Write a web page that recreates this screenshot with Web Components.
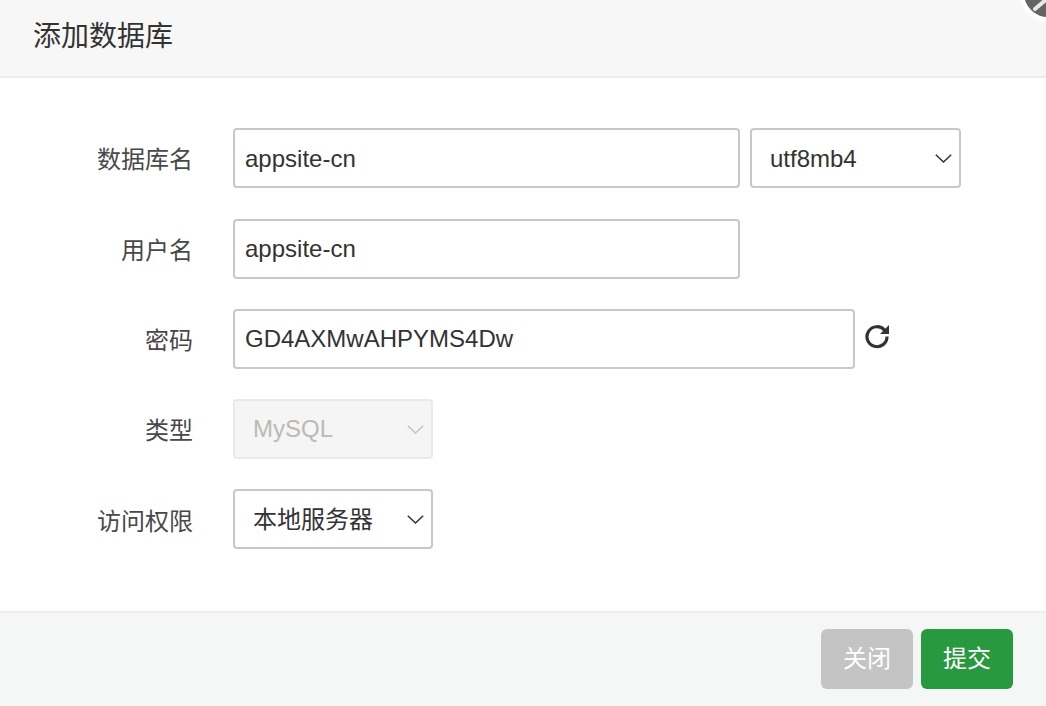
<!DOCTYPE html>
<html lang="zh">
<head>
<meta charset="utf-8">
<title>添加数据库</title>
<style>
  html, body { margin: 0; height: 100%; background: #fff; }
  body { font-family: "Liberation Sans", "Noto Sans CJK SC", sans-serif; color: #333; overflow: hidden; }
</style>
</head>
<body>
<db-dialog>
  <span slot="title">添加数据库</span>
  <form-row label="数据库名" nudge="-1">
    <text-field width="507" value="appsite-cn" nudge="1"></text-field>
    <select-field width="211" value="utf8mb4" nudge="1"></select-field>
  </form-row>
  <form-row label="用户名">
    <text-field width="507" value="appsite-cn"></text-field>
  </form-row>
  <form-row label="密码">
    <text-field width="622" value="GD4AXMwAHPYMS4Dw"></text-field>
    <refresh-icon></refresh-icon>
  </form-row>
  <form-row label="类型" nudge="-1">
    <select-field width="200" value="MySQL" disabled></select-field>
  </form-row>
  <form-row label="访问权限">
    <select-field width="200" value="本地服务器" nudge="-2"></select-field>
  </form-row>
  <action-button slot="actions" kind="close">关闭</action-button>
  <action-button slot="actions" kind="submit">提交</action-button>
</db-dialog>

<script>
// vertical text correction in px, applied as a margin inside a centred flex box
const nudgeOf = el => (Number(el.getAttribute('nudge')) || 0) * 2;

class DbDialog extends HTMLElement {
  connectedCallback() {
    this.attachShadow({ mode: 'open' });
    this.shadowRoot.innerHTML = `
      <style>
        :host { display: flex; flex-direction: column; position: relative; width: 1046px; height: 706px; overflow: hidden; background: #fff; }
        header {
          height: 76px;
          box-sizing: border-box;
          padding: 0 0 8px 33px;
          flex: none;
          display: flex;
          align-items: center;
          background: #f7f7f7;
          font-size: 28px;
          color: #333;
        }
        .rule { height: 2px; background: #ebebeb; flex: none; }
        .form { flex: 1; display: flex; flex-direction: column; gap: 30.25px; padding-top: 50.4px; }
        footer {
          height: 95px;
          flex: none;
          box-sizing: border-box;
          padding: 16px 33px 0 0;
          display: flex;
          justify-content: flex-end;
          gap: 8px;
          background: #f5f6f6;
          border-top: 2px solid #eeeeee;
        }
        .close {
          position: absolute;
          top: -31px;
          right: -26px;
          width: 48px;
          height: 48px;
          border-radius: 50%;
          background: #646464;
          box-shadow: 0 0 3px 5px #fff;
          display: block;
        }
        .close svg { display: block; width: 100%; height: 100%; }
      </style>
      <header><slot name="title"></slot></header>
      <div class="rule"></div>
      <div class="form"><slot></slot></div>
      <footer><slot name="actions"></slot></footer>
      <span class="close">
        <svg viewBox="0 0 48 48"><path d="M11 40 L24 29" stroke="#e8e8e8" stroke-width="4" stroke-linecap="round" fill="none"/></svg>
      </span>
    `;
  }
}
customElements.define('db-dialog', DbDialog);

class FormRow extends HTMLElement {
  connectedCallback() {
    this.attachShadow({ mode: 'open' });
    this.shadowRoot.innerHTML = `
      <style>
        :host { display: flex; align-items: center; height: 60px; }
        label { width: 193px; text-align: right; font-size: 24px; color: #484848; margin: ${nudgeOf(this)}px 40px 0 0; flex: none; }
        .fields { display: flex; align-items: center; gap: 10px; }
      </style>
      <label>${this.getAttribute('label')}</label>
      <div class="fields"><slot></slot></div>
    `;
  }
}
customElements.define('form-row', FormRow);

class TextField extends HTMLElement {
  connectedCallback() {
    this.attachShadow({ mode: 'open' });
    this.shadowRoot.innerHTML = `
      <style>
        :host { display: block; }
        .box {
          box-sizing: border-box;
          width: ${this.getAttribute('width')}px;
          height: 60px;
          padding: 0 10px;
          display: flex;
          align-items: center;
          border: 2px solid #c8c8c8;
          border-radius: 4px;
          font-size: 24px;
          color: #333;
          background: #fff;
        }
        span { margin-top: ${nudgeOf(this)}px; }
      </style>
      <div class="box"><span>${this.getAttribute('value')}</span></div>
    `;
  }
}
customElements.define('text-field', TextField);

class SelectField extends HTMLElement {
  connectedCallback() {
    const off = this.hasAttribute('disabled');
    this.attachShadow({ mode: 'open' });
    this.shadowRoot.innerHTML = `
      <style>
        :host { display: block; }
        .box {
          box-sizing: border-box;
          width: ${this.getAttribute('width')}px;
          height: 60px;
          padding: 0 7px 0 18px;
          display: flex;
          align-items: center;
          justify-content: space-between;
          border: 2px solid ${off ? '#e9e9e9' : '#c8c8c8'};
          border-radius: 4px;
          font-size: 24px;
          color: ${off ? '#bcbab1' : '#333'};
          background: ${off ? '#f5f5f5' : '#fff'};
        }
        span { margin-top: ${nudgeOf(this)}px; }
        svg { width: 17px; height: 9px; flex: none; }
      </style>
      <div class="box">
        <span>${this.getAttribute('value')}</span>
        <svg viewBox="0 0 17 9"><path d="M.8 .8 L8.5 8 L16.2 .8" fill="none" stroke="${off ? '#c4c4bc' : '#333'}" stroke-width="1.5"/></svg>
      </div>
    `;
  }
}
customElements.define('select-field', SelectField);

class RefreshIcon extends HTMLElement {
  connectedCallback() {
    this.attachShadow({ mode: 'open' });
    this.shadowRoot.innerHTML = `
      <style>
        :host { display: block; width: 26px; height: 26px; margin: -5px 0 0 -1px; }
        svg { display: block; width: 26px; height: 26px; }
      </style>
      <svg viewBox="0 0 26 26">
        <path d="M20.6 7.2 A10 10 0 1 0 23 13.5" fill="none" stroke="#333" stroke-width="3.2"/>
        <path d="M25 2 V11 H16 Z" fill="#333"/>
      </svg>
    `;
  }
}
customElements.define('refresh-icon', RefreshIcon);

class ActionButton extends HTMLElement {
  connectedCallback() {
    const bg = this.getAttribute('kind') === 'submit' ? '#28993f' : '#c4c4c4';
    this.attachShadow({ mode: 'open' });
    this.shadowRoot.innerHTML = `
      <style>
        :host { display: block; }
        button {
          box-sizing: border-box;
          width: 92px;
          height: 60px;
          border: 0;
          padding: 0 0 5px;
          border-radius: 6px;
          background: ${bg};
          color: #fff;
          font: inherit;
          font-size: 24px;
        }
      </style>
      <button type="button"><slot></slot></button>
    `;
  }
}
customElements.define('action-button', ActionButton);
</script>
</body>
</html>
